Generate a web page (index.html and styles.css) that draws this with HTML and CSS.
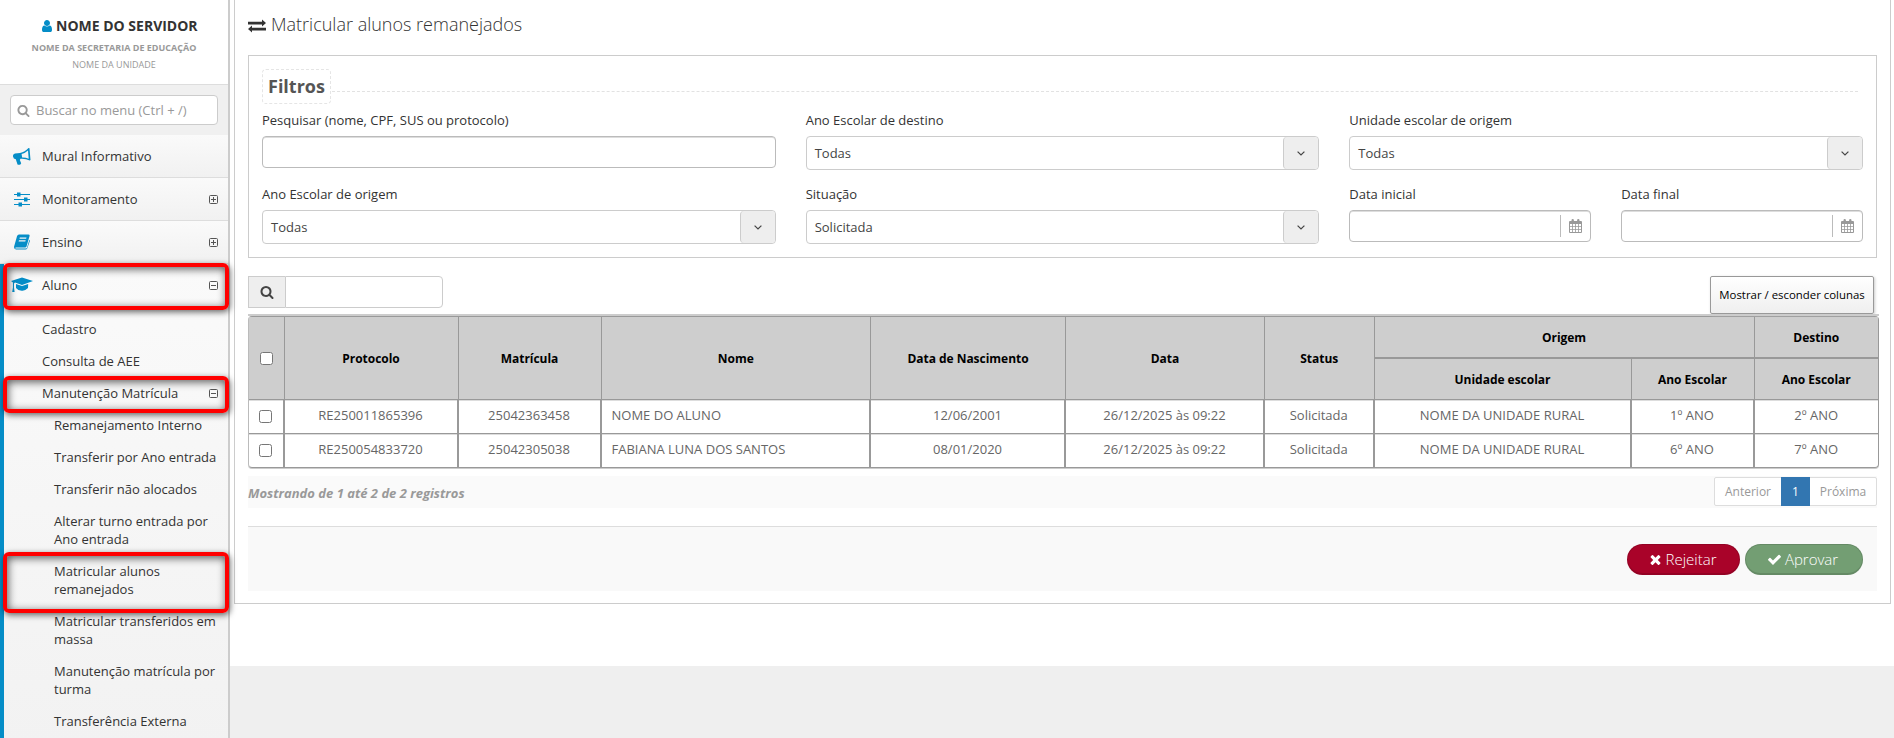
FILE: index.html
```html
<!DOCTYPE html>
<html lang="pt-BR">
  <head>
    <meta charset="UTF-8" />
    <meta name="viewport" content="width=device-width, initial-scale=1.0" />
    <title>Matricular alunos remanejados</title>
    <link rel="stylesheet" href="styles.css">
  </head>
  <body>
    <svg class="sprite">
      <symbol id="i-search" viewBox="0 0 1792 1792"><path d="M1216 832q0-185-131.5-316.5t-316.5-131.5-316.5 131.5-131.5 316.5 131.5 316.5 316.5 131.5 316.5-131.5 131.5-316.5zm512 832q0 52-38 90t-90 38q-54 0-90-38l-343-342q-179 124-399 124-143 0-273.5-55.5t-225-150-150-225-55.5-273.5 55.5-273.5 150-225 225-150 273.5-55.5 273.5 55.5 225 150 150 225 55.5 273.5q0 220-124 399l343 343q37 37 37 90z"/></symbol>
      <symbol id="i-user" viewBox="0 0 1792 1792"><path d="M1536 1399q0 109-62.5 187t-150.5 78h-854q-88 0-150.5-78t-62.5-187q0-85 8.5-160.5t31.5-152 58.5-131 94-89 134.5-34.5q131 128 313 128t313-128q76 0 134.5 34.5t94 89 58.5 131 31.5 152 8.5 160.5zm-256-887q0 159-112.5 271.5t-271.5 112.5-271.5-112.5-112.5-271.5 112.5-271.5 271.5-112.5 271.5 112.5 112.5 271.5z"/></symbol>
      <symbol id="i-check" viewBox="0 0 1792 1792"><path d="M1671 566q0 40-28 68l-724 724-136 136q-28 28-68 28t-68-28l-136-136-362-362q-28-28-28-68t28-68l136-136q28-28 68-28t68 28l294 295 656-657q28-28 68-28t68 28l136 136q28 28 28 68z"/></symbol>
      <symbol id="i-times" viewBox="0 0 1792 1792"><path d="M1490 1322q0 40-28 68l-136 136q-28 28-68 28t-68-28l-294-294-294 294q-28 28-68 28t-68-28l-136-136q-28-28-28-68t28-68l294-294-294-294q-28-28-28-68t28-68l136-136q28-28 68-28t68 28l294 294 294-294q28-28 68-28t68 28l136 136q28 28 28 68t-28 68l-294 294 294 294q28 28 28 68z"/></symbol>
      <symbol id="i-calendar" viewBox="0 0 13 14"><path fill-rule="evenodd" d="M1 2h1.500V1.200a1.200 1.200 0 0 1 2.400 0V2h3.200V1.200a1.200 1.200 0 0 1 2.400 0V2H12a1 1 0 0 1 1 1v10a1 1 0 0 1-1 1H1a1 1 0 0 1-1-1V3a1 1 0 0 1 1-1zM1 5v2.300h2.200V5zM4 5v2.300h2.200V5zM7 5v2.300h2.200V5zM10 5v2.300h2V5zM1 8v2.200h2.200V8zM4 8v2.200h2.200V8zM7 8v2.200h2.200V8zM10 8v2.200h2V8zM1 11v2h2.200v-2zM4 11v2h2.200v-2zM7 11v2h2.200v-2zM10 11v2h2v-2z"/></symbol>
      <symbol id="i-plus" viewBox="0 0 9 9"><path fill="none" stroke="currentColor" d="M1.500.5h6a1 1 0 0 1 1 1v6a1 1 0 0 1-1 1h-6a1 1 0 0 1-1-1v-6a1 1 0 0 1 1-1zM2 4.500h5M4.500 2v5"/></symbol>
      <symbol id="i-minus" viewBox="0 0 9 9"><path fill="none" stroke="currentColor" d="M1.500.5h6a1 1 0 0 1 1 1v6a1 1 0 0 1-1 1h-6a1 1 0 0 1-1-1v-6a1 1 0 0 1 1-1zM2 4.500h5"/></symbol>
      <symbol id="i-exchange" viewBox="0 0 18 14"><path d="M0 2.700h14V.6L18 4.100l-4 3.500V5.500H0zM18 8.700H4V6.600L0 10.100l4 3.500V11.500h14z"/></symbol>
      <symbol id="i-down" viewBox="0 0 8 5"><path fill="none" stroke="currentColor" stroke-width="1.200" d="M.6.6L4 4 7.400.6"/></symbol>
    </svg>

    <aside class="sidebar">
      <div class="user">
        <strong><svg class="icon-user"><use href="#i-user"/></svg> NOME DO SERVIDOR</strong>
        <b>NOME DA SECRETARIA DE EDUCAÇÃO</b>
        <span>NOME DA UNIDADE</span>
      </div>
      <div class="menu-search">
        <div class="menu-input">
          <svg><use href="#i-search"/></svg>
          <span>Buscar no menu (Ctrl + /)</span>
        </div>
      </div>
      <nav class="menu">
        <a class="item">
          <svg class="menu-icon horn" viewBox="0 0 18 17"><path fill-rule="evenodd" d="M15.500 0l1 .3 1 11.700-.8.600Q13 10.500 7.500 10.800L6.800 12l1.400 3.200-.8 1.300q-1.500.5-2.900 0L2.800 11.300Q.3 11 0 8.600t2-3l5-.6Q12 4 15.500 0zM15 2.500Q12 5.300 8.600 6l.5 3.400q3.600-.1 6.600 1.300z"/></svg>
          <span>Mural Informativo</span>
        </a>
        <a class="item">
          <svg class="menu-icon" viewBox="0 0 16 16"><path d="M0 3h16v1H0zM0 8h16v1H0zM0 13h16v1H0zM3 1.500h3.500v4H3zM10 6.500h3.500v4H10zM4.500 11.500H8v4H4.500z"/></svg>
          <span>Monitoramento</span>
          <svg class="toggle"><use href="#i-plus"/></svg>
        </a>
        <a class="item">
          <svg class="menu-icon" viewBox="0 0 16 15"><path fill-rule="evenodd" d="M5 0h9.500q1.500.2 1 1.800L12.500 12q-.4 1-1.500 1H2q-.8.100-.8.600t.8.500h10q.8 0 1-.8l2.400-8q.8.500.4 1.500l-2.600 7.300Q12.700 15 11.500 15H2Q-.3 14.500.1 12L3 1.800Q3.500.2 5 0zm.8 3-.3 1.200h6.600l.4-1.200zM5 5.700l-.4 1.200h6.700l.4-1.200z"/></svg>
          <span>Ensino</span>
          <svg class="toggle"><use href="#i-plus"/></svg>
        </a>
        <div class="open">
          <a class="item marked">
            <svg class="menu-icon cap" viewBox="0 0 22 15"><path d="M11 0l11 3.600L11 7.400 4 5.100 3 6v4l.6 4.500H1.200L1.900 10V5L0 3.600zM5 6.600l6 2 6.200-2L17 10.500Q14 13.500 11 13.200 7 13.300 5 10.500z"/></svg>
            <span>Aluno</span>
            <svg class="toggle"><use href="#i-minus"/></svg>
          </a>
          <a class="sub">Cadastro</a>
          <a class="sub">Consulta de AEE</a>
          <a class="sub marked">Manutenção Matrícula <svg class="toggle"><use href="#i-minus"/></svg></a>
          <a class="sub deep">Remanejamento Interno</a>
          <a class="sub deep">Transferir por Ano entrada</a>
          <a class="sub deep">Transferir não alocados</a>
          <a class="sub deep">Alterar turno entrada por Ano entrada</a>
          <a class="sub deep marked tall">Matricular alunos remanejados</a>
          <a class="sub deep">Matricular transferidos em massa</a>
          <a class="sub deep">Manutenção matrícula por turma</a>
          <a class="sub deep">Transferência Externa</a>
        </div>
      </nav>
    </aside>

    <main class="content">
      <section class="panel">
        <h1><svg><use href="#i-exchange"/></svg>Matricular alunos remanejados</h1>

        <div class="filters">
          <div class="legend"><h2>Filtros</h2></div>
          <div class="grid">
            <div class="field">
              <label>Pesquisar (nome, CPF, SUS ou protocolo)</label>
              <input type="text" />
            </div>
            <div class="field">
              <label>Ano Escolar de destino</label>
              <div class="select">Todas <i><svg><use href="#i-down"/></svg></i></div>
            </div>
            <div class="field">
              <label>Unidade escolar de origem</label>
              <div class="select">Todas <i><svg><use href="#i-down"/></svg></i></div>
            </div>
            <div class="field">
              <label>Ano Escolar de origem</label>
              <div class="select">Todas <i><svg><use href="#i-down"/></svg></i></div>
            </div>
            <div class="field">
              <label>Situação</label>
              <div class="select">Solicitada <i><svg><use href="#i-down"/></svg></i></div>
            </div>
            <div class="dates">
              <div class="field">
                <label>Data inicial</label>
                <div class="date"><i><svg><use href="#i-calendar"/></svg></i></div>
              </div>
              <div class="field">
                <label>Data final</label>
                <div class="date"><i><svg><use href="#i-calendar"/></svg></i></div>
              </div>
            </div>
          </div>
        </div>

        <div class="toolbar">
          <div class="search">
            <i><svg><use href="#i-search"/></svg></i>
            <input type="text" />
          </div>
          <button class="columns">Mostrar / esconder colunas</button>
        </div>

        <div class="table-wrap">
        <table>
          <colgroup>
            <col class="c-check"><col class="c-prot"><col class="c-mat"><col class="c-nome"><col class="c-nasc">
            <col class="c-data"><col class="c-status"><col class="c-unid"><col class="c-ano"><col class="c-dest">
          </colgroup>
          <thead>
            <tr>
              <th rowspan="2"><input type="checkbox" /></th>
              <th rowspan="2">Protocolo</th>
              <th rowspan="2">Matrícula</th>
              <th rowspan="2">Nome</th>
              <th rowspan="2">Data de Nascimento</th>
              <th rowspan="2">Data</th>
              <th rowspan="2">Status</th>
              <th colspan="2" class="group">Origem</th>
              <th class="group">Destino</th>
            </tr>
            <tr>
              <th>Unidade escolar</th>
              <th>Ano Escolar</th>
              <th>Ano Escolar</th>
            </tr>
          </thead>
          <tbody>
            <tr>
              <td><input type="checkbox" /></td>
              <td>RE250011865396</td>
              <td>25042363458</td>
              <td class="left">NOME DO ALUNO</td>
              <td>12/06/2001</td>
              <td>26/12/2025 às 09:22</td>
              <td>Solicitada</td>
              <td>NOME DA UNIDADE RURAL</td>
              <td>1º ANO</td>
              <td>2º ANO</td>
            </tr>
            <tr>
              <td><input type="checkbox" /></td>
              <td>RE250054833720</td>
              <td>25042305038</td>
              <td class="left">FABIANA LUNA DOS SANTOS</td>
              <td>08/01/2020</td>
              <td>26/12/2025 às 09:22</td>
              <td>Solicitada</td>
              <td>NOME DA UNIDADE RURAL</td>
              <td>6º ANO</td>
              <td>7º ANO</td>
            </tr>
          </tbody>
        </table>
        </div>

        <div class="table-footer">
          <em>Mostrando de 1 até 2 de 2 registros</em>
          <div class="pagination">
            <span>Anterior</span><span class="active">1</span><span>Próxima</span>
          </div>
        </div>

        <div class="actions">
          <button class="btn reject"><svg><use href="#i-times"/></svg>Rejeitar</button>
          <button class="btn approve"><svg><use href="#i-check"/></svg>Aprovar</button>
        </div>
      </section>
    </main>
  </body>
</html>
```
FILE: styles.css
```css
* {
  box-sizing: border-box;
  margin: 0;
  padding: 0;
}
body {
  display: flex;
  height: 738px;
  overflow: hidden;
  font-family: "Open Sans", "Noto Sans", sans-serif;
  font-size: 13px;
  line-height: 18px;
  color: #333;
  background: #efefef;
}
svg {
  fill: currentColor;
}
.sprite {
  display: none;
}
input,
button {
  font-family: inherit;
}

/* sidebar */
.sidebar {
  flex: none;
  width: 230px;
  height: 738px;
  border-right: 2px solid #ccc;
  background: #f5f5f5;
}
.user {
  height: 85px;
  padding-top: 17px;
  border-bottom: 1px solid #ddd;
  background: #fff;
  text-align: center;
}
.user strong,
.user b,
.user span {
  display: block;
}
.user strong {
  padding-left: 10px;
  font-size: 14px;
}
.icon-user {
  width: 14px;
  height: 14px;
  margin-right: -2px;
  vertical-align: -2px;
  color: #058dc7;
}
.user b {
  margin-top: 4px;
  font-size: 9px;
  color: #999;
}
.user span {
  margin-top: -1px;
  font-size: 9px;
  color: #999;
}
.menu-search {
  height: 50px;
  padding: 10px;
  background: #f0f0f0;
}
.menu-input {
  display: flex;
  align-items: center;
  gap: 6px;
  height: 30px;
  padding-left: 6px;
  border: 1px solid #ccc;
  border-radius: 4px;
  background: #fff;
  color: #999;
}
.menu-input svg {
  width: 13px;
  height: 13px;
}
.item {
  display: flex;
  align-items: center;
  height: 43px;
  padding: 0 10px 0 14px;
  border-bottom: 1px solid #ddd;
  background: linear-gradient(#fafafa, #f1f1f1);
}
.item span {
  flex: 1;
  margin-left: 12px;
}
.menu-icon {
  width: 16px;
  height: 16px;
  color: #058dc7;
}
.horn {
  width: 18px;
  height: 17px;
  margin: 0 -1px;
}
.toggle {
  width: 9px;
  height: 9px;
  color: #555;
}
.open {
  height: 480px;
  border-left: 4px solid #058dc7;
  background: linear-gradient(#fafafa, #f2f2f2);
}
.open .item {
  height: 49px;
  padding: 0 10px 7px 7px;
  border: 0;
  background: none;
}
.open .item span {
  margin-left: 9px;
}
.cap {
  width: 22px;
}
.sub {
  display: block;
  padding: 7px 10px 7px 38px;
}
.sub .toggle {
  float: right;
  margin-top: 5px;
}
.deep {
  padding-left: 50px;
}

/* highlighted menu entries */
.marked {
  position: relative;
}
.marked::after {
  content: "";
  position: absolute;
  left: -1px;
  top: -1px;
  box-sizing: border-box;
  width: 226px;
  height: 47px;
  border: 4px solid #f00;
  border-radius: 6px;
  box-shadow: 1px 2px 6px rgba(0, 0, 0, 0.6), inset 1px 2px 8px rgba(0, 0, 0, 0.65);
}
.sub.marked::after {
  top: -1px;
  height: 37px;
}
.sub.tall::after {
  height: 61px;
  top: -3px;
}

/* content */
.content {
  flex: 1;
  height: 666px;
  padding: 0 3px 0 4px;
  background: #fff;
}
.panel {
  height: 604px;
  padding: 12px 13px 0;
  border: 1px solid #ccc;
  border-top: 0;
}
h1 {
  height: 43px;
  font-size: 18px;
  font-weight: 300;
  line-height: 25px;
}
h1 svg {
  width: 18px;
  height: 14px;
  margin-right: 5px;
  vertical-align: -2px;
}
.filters {
  height: 203px;
  padding: 13px;
  border: 1px solid #ccc;
}
.legend {
  display: flex;
  align-items: center;
}
.legend h2 {
  height: 35px;
  padding: 0 5px;
  border: 1px dashed #e5e5e5;
  border-radius: 4px;
  font-size: 18px;
  line-height: 33px;
  color: #555;
}
.legend::after {
  content: "";
  flex: 1;
  margin: 10px 5px 0 1px;
  border-top: 1px dashed #e2e2e2;
}
.grid {
  display: grid;
  grid-template-columns: repeat(3, 1fr);
  grid-auto-rows: 74px;
  column-gap: 30px;
  padding-top: 7px;
}
.dates {
  display: grid;
  grid-template-columns: 1fr 1fr;
  gap: 30px;
}
.field label {
  display: block;
  height: 25px;
}
.field input,
.date {
  width: 100%;
  height: 32px;
  border: 1px solid #bbb;
  border-radius: 4px;
  box-shadow: inset 0 1px 0 #ddd;
}
.select {
  display: flex;
  justify-content: space-between;
  height: 34px;
  padding-left: 8px;
  border: 1px solid #ccc;
  border-radius: 4px;
  line-height: 33px;
  color: #444;
}
.select i {
  display: flex;
  align-items: center;
  justify-content: center;
  width: 35px;
  border-left: 1px solid #ccc;
  border-radius: 4px;
  background: #eee;
}
.select svg {
  width: 8px;
  height: 5px;
}
.date {
  display: flex;
  justify-content: flex-end;
  align-items: center;
}
.date i {
  display: flex;
  align-items: center;
  width: 30px;
  height: 22px;
  padding-left: 8px;
  border-left: 1px solid #bbb;
  color: #999;
}
.date svg {
  width: 13px;
  height: 14px;
}

.toolbar {
  display: flex;
  justify-content: space-between;
  height: 38px;
  margin-top: 18px;
  padding-right: 3px;
}
.search {
  display: flex;
  width: 195px;
  height: 32px;
}
.search i {
  display: flex;
  align-items: center;
  justify-content: center;
  width: 37px;
  border: 1px solid #ccc;
  border-right: 0;
  background: #eee;
  color: #444;
}
.search svg {
  width: 14px;
  height: 14px;
}
.search input {
  flex: 1;
  min-width: 0;
  border: 1px solid #ccc;
  border-radius: 0 4px 4px 0;
}
.columns {
  width: 164px;
  height: 38px;
  padding-bottom: 2px;
  border: 1px solid #999;
  border-radius: 2px;
  background: linear-gradient(#fff, #efefef);
  box-shadow: 1px 1px 3px #ccc;
  font-size: 11.4px;
  color: #000;
}

.table-wrap {
  height: 155px;
  margin-right: -2px;
  border-top: 2px solid #ccc;
}
table {
  width: 1631px;
  table-layout: fixed;
  border-collapse: separate;
  border-spacing: 0;
  border: 1px solid #999;
  border-left-color: #bbb;
  border-radius: 4px;
  box-shadow: 0 1px 0 #ccc;
}
.c-check { width: 35.5px; }
.c-prot { width: 174px; }
.c-mat { width: 143px; }
.c-nome { width: 269.5px; }
.c-nasc { width: 195px; }
.c-data { width: 199px; }
.c-status { width: 109.5px; }
.c-unid { width: 257px; }
.c-ano { width: 123px; }
th {
  height: 41px;
  padding-top: 1px;
  border-right: 1px solid #999;
  border-bottom: 1px solid #999;
  background: #cecece;
  font-size: 12px;
  letter-spacing: -0.03px;
  color: #000;
}
.group {
  height: 42px;
  border-bottom-width: 2px;
}
td {
  height: 34px;
  padding-bottom: 3px;
  border-right: 2px solid #999;
  border-bottom: 1px solid #999;
  box-shadow: inset 0 1px 0 #ddd;
  font-size: 13px;
  text-align: center;
  color: #666;
}
td.left {
  padding-left: 10px;
  text-align: left;
}
th:last-child,
td:last-child {
  border-right: 0;
}
tbody tr:last-child td {
  height: 33px;
  border-bottom: 0;
}
th input,
td input {
  display: block;
  width: 13px;
  height: 13px;
  margin: 0 auto;
}
td input {
  position: relative;
  top: 1px;
}

.table-footer {
  display: flex;
  justify-content: space-between;
  height: 32px;
  margin-top: 7px;
  background: #fafafa;
}
.table-footer em {
  font-size: 13px;
  font-weight: 700;
  line-height: 35px;
  color: #999;
}
.pagination {
  display: flex;
  width: 163px;
  height: 29px;
  margin-top: 1px;
  border: 1px solid #ddd;
  border-radius: 2px;
  background: #fff;
  font-size: 12px;
  line-height: 28px;
  text-align: center;
  color: #999;
}
.pagination span {
  flex: 1;
}
.pagination .active {
  flex: 0 0 29px;
  margin: -1px 0;
  line-height: 30px;
  background: #3276b1;
  color: #fff;
}

.actions {
  display: flex;
  justify-content: flex-end;
  gap: 5px;
  height: 65px;
  margin-top: 18px;
  padding: 17px 14px 0 0;
  border-top: 1px solid #ddd;
  background: #f9f9f9;
}
.btn {
  width: 113px;
  height: 31px;
  border: 1px solid rgba(0, 0, 0, 0.12);
  border-bottom-width: 2px;
  border-radius: 16px;
  font-size: 15px;
  font-weight: 300;
  color: #fff;
}
.btn svg {
  width: 15px;
  height: 15px;
  margin-left: -3px;
  margin-right: 3px;
  vertical-align: -2px;
}
.reject {
  background: #a90329;
}
.approve {
  width: 118px;
  background: #739e73;
}
```
